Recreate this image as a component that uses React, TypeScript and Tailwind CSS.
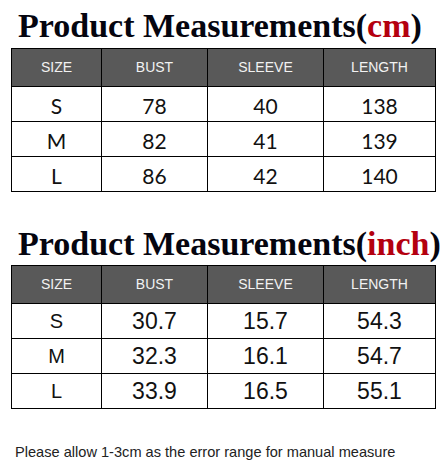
const headers = ["SIZE", "BUST", "SLEEVE", "LENGTH"];

const cmRows = [
  ["S", "78", "40", "138"],
  ["M", "82", "41", "139"],
  ["L", "86", "42", "140"],
];

const inchRows = [
  ["S", "30.7", "15.7", "54.3"],
  ["M", "32.3", "16.1", "54.7"],
  ["L", "33.9", "16.5", "55.1"],
];

const cols = "grid grid-cols-[90px_106px_116px_112px]";

function Title({ unit }: { unit: string }) {
  return (
    <h2 className="pl-[18px] font-['Liberation_Serif',serif] text-[34px] font-bold leading-[40px] text-[#05050f] whitespace-nowrap">
      Product Measurements(<span className="text-[#b4000f]">{unit}</span>)
    </h2>
  );
}

function SizeTable({ rows, inch }: { rows: string[][]; inch?: boolean }) {
  return (
    <div className={`${cols} ml-[11px] w-[425px] border-l border-t border-black`}>
      {headers.map((h) => (
        <div
          key={h}
          className="flex h-[38px] items-center justify-center border-b border-r border-black bg-[#595959] font-['Liberation_Sans',Arial,sans-serif] text-[14px] text-[#f2f2f2]"
        >
          {h}
        </div>
      ))}
      {rows.map((r) =>
        r.map((v, i) => (
          <div
            key={r[0] + i}
            className={
              inch
                ? `flex h-[35px] items-center justify-center border-b border-r border-black font-['Liberation_Sans',Arial,sans-serif] text-[#111] ${
                    i === 0 ? "text-[20px]" : "text-[23px]"
                  }`
                : "flex h-[35px] items-center justify-center border-b border-r border-black pt-[3px] font-['Lato',sans-serif] text-[21px] text-[#111]"
            }
          >
            {v}
          </div>
        ))
      )}
    </div>
  );
}

export default function App() {
  return (
    <div className="h-[463px] w-[447px] overflow-hidden bg-white pt-[6px]">
      <Title unit="cm" />
      <div className="mt-[2px]">
        <SizeTable rows={cmRows} />
      </div>
      <div className="mt-[32px]">
        <Title unit="inch" />
      </div>
      <div className="mt-[1px]">
        <SizeTable rows={inchRows} inch />
      </div>
      <p className="mt-[33px] pl-[15px] font-['Liberation_Sans',Arial,sans-serif] text-[14.6px] leading-[20px] text-[#222]">
        Please allow 1-3cm as the error range for manual measure
      </p>
    </div>
  );
}
